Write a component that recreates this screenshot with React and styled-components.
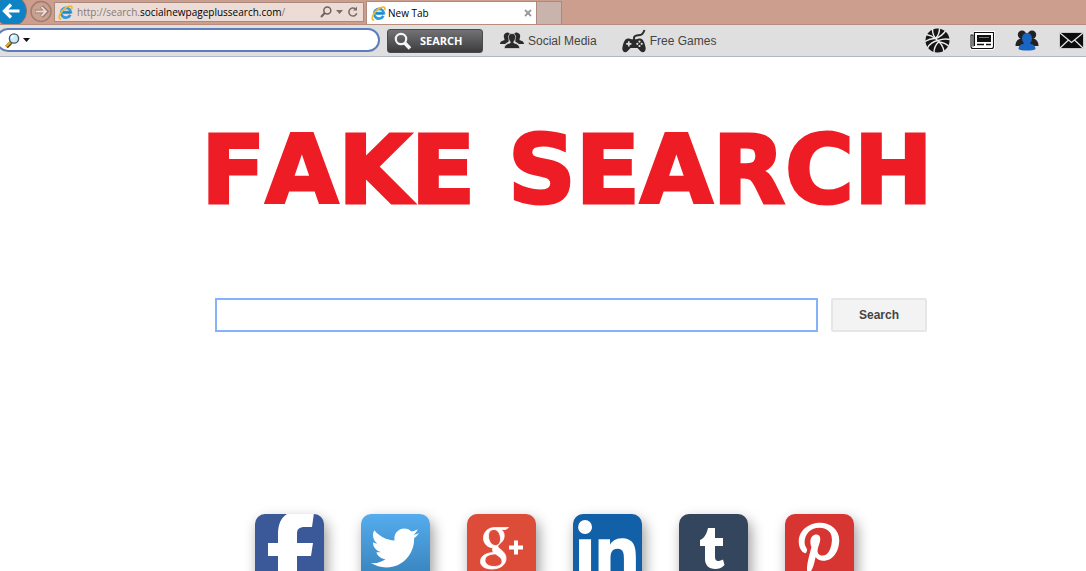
import React from "react";
import styled, { createGlobalStyle } from "styled-components";
import { FaTwitter, FaLinkedinIn, FaPinterestP } from "react-icons/fa";

const GlobalStyle = createGlobalStyle`
  * {
    box-sizing: border-box;
  }
  body {
    margin: 0;
    background: #fff;
    font-family: "Liberation Sans", Arial, sans-serif;
  }
  svg {
    display: block;
    flex: none;
  }
`;

const Page = styled.div`
  height: 100vh;
  overflow: hidden;
`;

/* browser chrome */

const BrowserBar = styled.header`
  display: flex;
  align-items: flex-start;
  height: 25px;
  background: #cc9e8d;
  border-bottom: 1px solid #b98d7e;
  overflow: hidden;
`;

const NavButton = styled.button`
  border: 0;
  padding: 0;
  background: none;
  width: ${({ $width }) => $width}px;
  height: 24px;
  flex: none;
`;

const AddressBar = styled.div`
  display: flex;
  align-items: center;
  width: 310px;
  height: 20px;
  margin: 2px 2px 0 1px;
  padding: 0 4px 0 3px;
  gap: 4px;
  flex: none;
  background: #ecdcd5;
  border: 1px solid #a98a7f;
`;

const Url = styled.span`
  flex: 1;
  font-family: "Open Sans", sans-serif;
  font-size: 10px;
  line-height: 16px;
  white-space: nowrap;
  color: #857b76;
  b {
    font-weight: normal;
    color: #000;
  }
`;

const IconButton = styled.button`
  display: flex;
  align-items: center;
  border: 0;
  padding: 0;
  background: none;
`;

const Tab = styled.div`
  display: flex;
  align-items: center;
  width: 171px;
  height: 23px;
  margin-top: 1px;
  padding: 0 4px;
  gap: 2px;
  flex: none;
  background: #fff;
  border: 1px solid #b0897c;
  border-bottom: 0;
`;

const TabTitle = styled.span`
  flex: 1;
  font-family: "Open Sans", sans-serif;
  font-size: 10px;
  line-height: 16px;
  color: #000;
`;

const NewTab = styled.button`
  width: 25px;
  height: 23px;
  margin-top: 1px;
  padding: 0;
  flex: none;
  background: #c9b4ad;
  border: 1px solid #a98a7f;
  border-width: 1px 1px 0 0;
`;

/* toolbar */

const Toolbar = styled.nav`
  display: flex;
  align-items: center;
  height: 32px;
  padding-right: 2px;
  background: #dfdfdf;
  border-bottom: 1px solid #b1b6c6;
`;

const ToolbarSearch = styled.div`
  display: flex;
  align-items: center;
  width: 384px;
  height: 24px;
  margin: 0 7px 1px -4px;
  padding: 0 7px;
  gap: 3px;
  flex: none;
  background: #fff;
  border: 2px solid #5e7dbb;
  border-radius: 12px;
`;

const ToolbarInput = styled.input`
  flex: 1;
  min-width: 0;
  border: 0;
  outline: none;
  background: none;
  font-size: 12px;
`;

const ToolbarButton = styled.button`
  display: flex;
  align-items: center;
  width: 96px;
  height: 24px;
  margin-right: 17px;
  padding: 0 6px;
  gap: 8px;
  flex: none;
  border: 1px solid #4a4a4c;
  border-radius: 3px;
  background: linear-gradient(#737375, #5a5a5c 45%, #3c3c3e);
  color: #fff;
  font-family: "Open Sans", sans-serif;
  font-size: 11px;
  font-weight: bold;
`;

const ToolbarLink = styled.a`
  display: flex;
  align-items: center;
  gap: 4px;
  margin-right: 25px;
  font-size: 12px;
  white-space: nowrap;
  color: #444;
  text-decoration: none;
`;

const Shortcuts = styled.div`
  display: flex;
  align-items: center;
  gap: 20px;
  margin-left: auto;
`;

/* page body */

const Main = styled.main`
  display: flex;
  flex-direction: column;
  align-items: center;
  padding-left: 48px;
`;

const Title = styled.h1`
  margin: 56px 0 0;
  font-family: "DejaVu Sans", sans-serif;
  font-size: 94px;
  font-weight: bold;
  font-kerning: none;
  line-height: 116px;
  white-space: nowrap;
  color: #ee1c25;
  -webkit-text-stroke: 3px #ee1c25;
`;

const SearchForm = styled.form`
  display: flex;
  gap: 13px;
  width: 712px;
  max-width: 100%;
  margin: 69px 0 0 8px;
`;

const SearchInput = styled.input`
  flex: 1;
  min-width: 0;
  height: 34px;
  padding: 0 8px;
  border: 2px solid #86b2f8;
  outline: none;
  font-size: 16px;
`;

const SearchButton = styled.button`
  width: 96px;
  height: 34px;
  padding: 0;
  border: 2px solid #e6e6e6;
  border-radius: 2px;
  background: #f3f3f3;
  color: #444;
  font-family: "Liberation Sans", Arial, sans-serif;
  font-size: 12px;
  font-weight: bold;
`;

const SocialList = styled.div`
  display: flex;
  gap: 37px;
  margin: 182px 26px 0 0;
`;

const SocialTile = styled.a`
  display: flex;
  justify-content: center;
  width: 69px;
  height: 69px;
  padding-top: ${({ $top }) => $top}px;
  overflow: hidden;
  border-radius: 10px;
  background: ${({ $background }) => $background};
  box-shadow: 3px 6px 14px rgba(0, 0, 0, 0.4);
  color: #fff;
`;

const IeLogo = () => (
  <svg width="15" height="15" viewBox="0 0 16 16" fill="none">
    <path d="M13.2 10.6a5.2 5.2 0 1 1 .5-3H5" stroke="#2b9be0" strokeWidth="2.8" />
    <path d="M5 8.2h8.6" stroke="#1c82c9" strokeWidth="1.8" />
    <path
      d="M3.5 14.6C.6 15.6.7 12.4 2.8 8.7 5.4 4.3 10.8.4 13.7 1.2c1.5.4 1.3 2 .7 3.3"
      stroke="#f3b92b"
      strokeWidth="1.8"
    />
  </svg>
);

const BackIcon = () => (
  <svg width="29" height="24" viewBox="0 0 29 24">
    <circle cx="11" cy="11" r="15.5" fill="#0d82c4" stroke="#8e6f68" />
    <path d="M19.5 11H5M11 4.500L4.500 11l6.500 6.500" fill="none" stroke="#fff" strokeWidth="3.2" />
  </svg>
);

const ForwardIcon = () => (
  <svg width="24" height="24" viewBox="0 0 24 24" fill="none">
    <circle cx="12" cy="11.5" r="10" fill="#c9a092" stroke="#a17c70" strokeWidth="1.5" />
    <path d="M6 11.5h11M12.5 6.500l5 5-5 5" stroke="#8d6f66" strokeWidth="3.6" />
    <path d="M6.5 11.5H17M12.5 7l4.500 4.500-4.500 4.500" stroke="#ead9d2" strokeWidth="2" />
  </svg>
);

const AddressSearchIcon = () => (
  <svg width="12" height="12" viewBox="0 0 12 12" fill="none" stroke="#6d625e" strokeWidth="1.5">
    <circle cx="7.3" cy="4.500" r="3.5" />
    <path d="M4.800 7L1 11" strokeWidth="2" />
  </svg>
);

const CaretIcon = ({ color }) => (
  <svg width="7" height="4" viewBox="0 0 7 4" fill={color}>
    <path d="M0 0h7L3.500 4z" />
  </svg>
);

const RefreshIcon = () => (
  <svg width="12" height="12" viewBox="0 0 12 12" fill="none" stroke="#7a6d68" strokeWidth="1.6">
    <path d="M9.700 7.200A4 4 0 1 1 8.500 3" />
    <path d="M10 .5v4H6z" fill="#7a6d68" stroke="none" />
  </svg>
);

const CloseIcon = () => (
  <svg width="8" height="8" viewBox="0 0 8 8" stroke="#999" strokeWidth="1.8">
    <path d="M1 1l6 6M7 1L1 7" />
  </svg>
);

const MagnifierIcon = () => (
  <svg width="15" height="15" viewBox="0 0 15 15" fill="none">
    <path d="M6 9.500L1.500 14" stroke="#5a3f08" strokeWidth="3.6" />
    <path d="M5.500 9.200L1 13.500" stroke="#e8ac1a" strokeWidth="2.2" />
    <circle cx="9" cy="5.500" r="4.600" fill="#c9eefc" stroke="#4c5560" strokeWidth="1.4" />
    <path d="M6.500 5.500A2.500 2.500 0 0 1 9 3" stroke="#fff" strokeWidth="1.5" />
  </svg>
);

const ButtonMagnifier = () => (
  <svg width="18" height="18" viewBox="0 0 18 18" fill="none" stroke="#f4f4f4">
    <circle cx="7" cy="7" r="5.200" strokeWidth="2.200" />
    <path d="M10.800 11l5.200 5.500" strokeWidth="3.600" />
  </svg>
);

const CrowdIcon = () => (
  <svg width="24" height="17" viewBox="0 0 24 17" fill="#2b2b2b">
    <path d="M6.500.8c2-.8 3.800.5 3.600 3C10 6 9.300 7 8.700 8v1.500L5 12H0c.2-2 .8-2.800 4.300-3.800L4.500 7C3.300 5 3.300 1.700 6.500.8z" />
    <path d="M17.500.8c-2-.8-3.800.5-3.600 3 .1 2.200.8 3.200 1.400 4.200v1.500L19 12h5c-.2-2-.8-2.800-4.300-3.800L19.500 7c1.200-2 1.200-5.300-2-6.200z" />
    <path
      d="M12 1.500c2.700 0 3.800 1.800 3.500 4-.2 2-.8 3.300-1.700 4.200v1.200c3.600 1 5.600 1.800 6 5.600H4.200c.4-3.800 2.400-4.600 6-5.600V9.700C9.300 8.800 8.700 7.500 8.500 5.500c-.3-2.200.8-4 3.500-4z"
      stroke="#dfdfdf"
      strokeWidth=".7"
    />
  </svg>
);

const GamepadIcon = () => (
  <svg width="24" height="24" viewBox="0 0 24 24" fill="#2b2b2b">
    <path d="M12 11V9c0-2.500 2-2.500 4.500-2.800C20 5.800 21 5 22.500 1" fill="none" stroke="#2b2b2b" strokeWidth="2" />
    <path d="M6 9.500c2 0 2.500.8 6 .8s4-.8 6-.8c3.200 0 4.600 4 5.600 9 .7 4.300-2.800 6.300-5.300 3.500L15.500 19h-7l-2.800 3C3.200 24.800-.3 22.800.4 18.500c1-5 2.400-9 5.600-9z" />
    <path d="M6.800 12.200v5.200M4.200 14.800h5.200" stroke="#dfdfdf" strokeWidth="1.700" />
    <g fill="#dfdfdf">
      <circle cx="17.500" cy="12.600" r="1.100" />
      <circle cx="17.500" cy="17" r="1.100" />
      <circle cx="15.300" cy="14.800" r="1.100" />
      <circle cx="19.700" cy="14.800" r="1.100" />
    </g>
  </svg>
);

const BasketballIcon = () => (
  <svg width="25" height="25" viewBox="0 0 25 25" fill="none" stroke="#eee" strokeWidth="1.4">
    <circle cx="12.500" cy="12.500" r="12" fill="#161616" stroke="none" />
    <path d="M7.500 1c0 4 1 7 3 9.500" />
    <path d="M1 6.500c4 .5 7 2 9.500 4C15 9 18 6.500 20.500 3" />
    <path d="M0 13.500c4-2.500 7-3.200 10.500-3 5 4 8 8.500 8.500 13" />
    <path d="M10.500 10.500c2.500-2.500 4-6 4-10" />
    <path d="M2.500 20c2-4 5-6.500 10.500-7.500 4-1.500 8-2 12-1" />
    <path d="M9 24.500c0-4.500 1.500-7.500 4.500-10.500 4 .5 8 2 10 4" />
  </svg>
);

const NewsIcon = () => (
  <svg width="25" height="19" viewBox="0 0 25 19">
    <path d="M4.500 1.500h19v14c0 1.300-.7 2-2 2H3c-1.300 0-2-.7-2-2V4h3.500" fill="#fff" stroke="#fff" strokeWidth="3" />
    <path
      d="M4.500 15V1.500h19v14c0 1.300-.7 2-2 2H3c-1.300 0-2-.7-2-2V4h2v11.500"
      fill="#fff"
      stroke="#111"
      strokeWidth="1.1"
    />
    <path d="M7 4h14v7H7z" fill="#111" />
    <path d="M9 6.500h10" stroke="#777" />
    <path d="M7 13.500h7M16 13.500h5" stroke="#111" strokeWidth="1.500" />
  </svg>
);

const GroupIcon = () => (
  <svg width="24" height="21" viewBox="0 0 24 21">
    <g fill="#222">
      <circle cx="7" cy="4.800" r="4.200" />
      <circle cx="17" cy="4.800" r="4.200" />
      <path d="M.5 16c0-4 1.500-6.500 5-7.500h13c3.500 1 5 3.500 5 7.500z" />
    </g>
    <g fill="#1965c4">
      <ellipse cx="12" cy="8.500" rx="5" ry="5.700" />
      <path d="M9 11h6v2.500c3.500.5 5.500 2.500 5.500 5.500-2 2-15 2-17 0 0-3 2-5 5.500-5.500z" />
    </g>
  </svg>
);

const MailIcon = () => (
  <svg width="25" height="17" viewBox="0 0 25 17" fill="none">
    <path d="M.5.5h24v16H.5z" fill="#0c0c0c" stroke="#fff" strokeWidth=".6" />
    <path d="M1 1l11.500 9.500L24 1M1 16l8.500-8M24 16l-8.500-8" stroke="#e8e8e8" strokeWidth="1.2" />
  </svg>
);

const FacebookLogo = () => (
  <svg width="69" height="69" viewBox="0 0 69 69" fill="#fff">
    <path d="M23 69V42H13V29h10V20C23 9 27 2 34-1h25l-2 14h-7c-6 0-8 2-8 7v9h16l-2 13H42v27z" />
  </svg>
);

const GooglePlusLogo = () => (
  <svg width="69" height="69" viewBox="0 0 69 69" fill="#fff">
    <path
      fillRule="evenodd"
      d="M41.500 13.500H28c-7 0-11.500 4.700-11.500 10.500 0 5.500 4 9.500 9.500 9.800-.8 1.800-.6 3.200.5 4.700C18 39 13.500 42.500 13.500 47.500c0 5 5 7.500 11.500 7.500 8.500 0 14-4.500 14-10.500 0-4-2-6.500-6-9.500-3-2.200-2.500-3.500 0-5.500 2.500-2 4.200-4.200 4.200-7.800 0-3-1.200-4.700-3-6.200h4.500zM27 15.500c4 0 6.500 4.500 6.500 9.500 0 4-2 6.500-5 6.500-4.500 0-7-5-7-9.500 0-3.700 2-6.500 5.500-6.500zM28.500 40c4.500 3 6.500 4.500 6.500 7.200 0 3.300-3 5.300-8 5.300-5.300 0-9-2.500-9-6.200 0-4 4-6.300 10.500-6.300z"
      stroke="#fff"
      strokeWidth=".8"
    />
    <path d="M47 26.500h4v5h5v4h-5v5h-4v-5h-5v-4h5z" />
  </svg>
);

const TumblrLogo = () => (
  <svg width="69" height="69" viewBox="0 0 69 69" fill="#fff">
    <path d="M29 14h7v10h8v8h-8v11c0 4.500 3 5 8 2.500l1.500 5.500c-3 3-6 4-9 4-7 0-10.500-4-10.500-10V32h-5v-6c4.500-2 6.500-6 8-12z" />
  </svg>
);

const socials = [
  { name: "Facebook", background: "#3b5998", top: 0, icon: <FacebookLogo /> },
  { name: "Twitter", background: "linear-gradient(#55acee, #3580b8)", top: 10, icon: <FaTwitter size={48} /> },
  { name: "Google Plus", background: "#dd4b39", top: 0, icon: <GooglePlusLogo /> },
  { name: "LinkedIn", background: "#1160a8", top: 6, icon: <FaLinkedinIn size={66} /> },
  { name: "Tumblr", background: "#34465d", top: 0, icon: <TumblrLogo /> },
  { name: "Pinterest", background: "#d73532", top: 8, icon: <FaPinterestP size={54} /> },
];

const shortcuts = [
  { name: "Sports", icon: <BasketballIcon /> },
  { name: "News", icon: <NewsIcon /> },
  { name: "Community", icon: <GroupIcon /> },
  { name: "Mail", icon: <MailIcon /> },
];

const App = () => (
  <Page>
    <GlobalStyle />
    <BrowserBar>
      <NavButton $width={29} aria-label="Back">
        <BackIcon />
      </NavButton>
      <NavButton $width={24} aria-label="Forward">
        <ForwardIcon />
      </NavButton>
      <AddressBar>
        <IeLogo />
        <Url>
          http://search.<b>socialnewpageplussearch.com</b>/
        </Url>
        <IconButton aria-label="Search address">
          <AddressSearchIcon />
        </IconButton>
        <IconButton aria-label="Address history">
          <CaretIcon color="#7a6d68" />
        </IconButton>
        <IconButton aria-label="Refresh">
          <RefreshIcon />
        </IconButton>
      </AddressBar>
      <Tab>
        <IeLogo />
        <TabTitle>New Tab</TabTitle>
        <IconButton aria-label="Close tab">
          <CloseIcon />
        </IconButton>
      </Tab>
      <NewTab aria-label="Open new tab" />
    </BrowserBar>
    <Toolbar>
      <ToolbarSearch>
        <MagnifierIcon />
        <IconButton aria-label="Search engines">
          <CaretIcon color="#111" />
        </IconButton>
        <ToolbarInput type="text" aria-label="Toolbar search" />
      </ToolbarSearch>
      <ToolbarButton>
        <ButtonMagnifier />
        SEARCH
      </ToolbarButton>
      <ToolbarLink href="#social">
        <CrowdIcon />
        Social Media
      </ToolbarLink>
      <ToolbarLink href="#games">
        <GamepadIcon />
        Free Games
      </ToolbarLink>
      <Shortcuts>
        {shortcuts.map(({ name, icon }) => (
          <a key={name} href={`#${name.toLowerCase()}`} aria-label={name}>
            {icon}
          </a>
        ))}
      </Shortcuts>
    </Toolbar>
    <Main>
      <Title>FAKE SEARCH</Title>
      <SearchForm onSubmit={(e) => e.preventDefault()}>
        <SearchInput type="text" aria-label="Search the web" />
        <SearchButton type="submit">Search</SearchButton>
      </SearchForm>
      <SocialList>
        {socials.map(({ name, background, top, icon }) => (
          <SocialTile key={name} href="#social" aria-label={name} $background={background} $top={top}>
            {icon}
          </SocialTile>
        ))}
      </SocialList>
    </Main>
  </Page>
);

export default App;
